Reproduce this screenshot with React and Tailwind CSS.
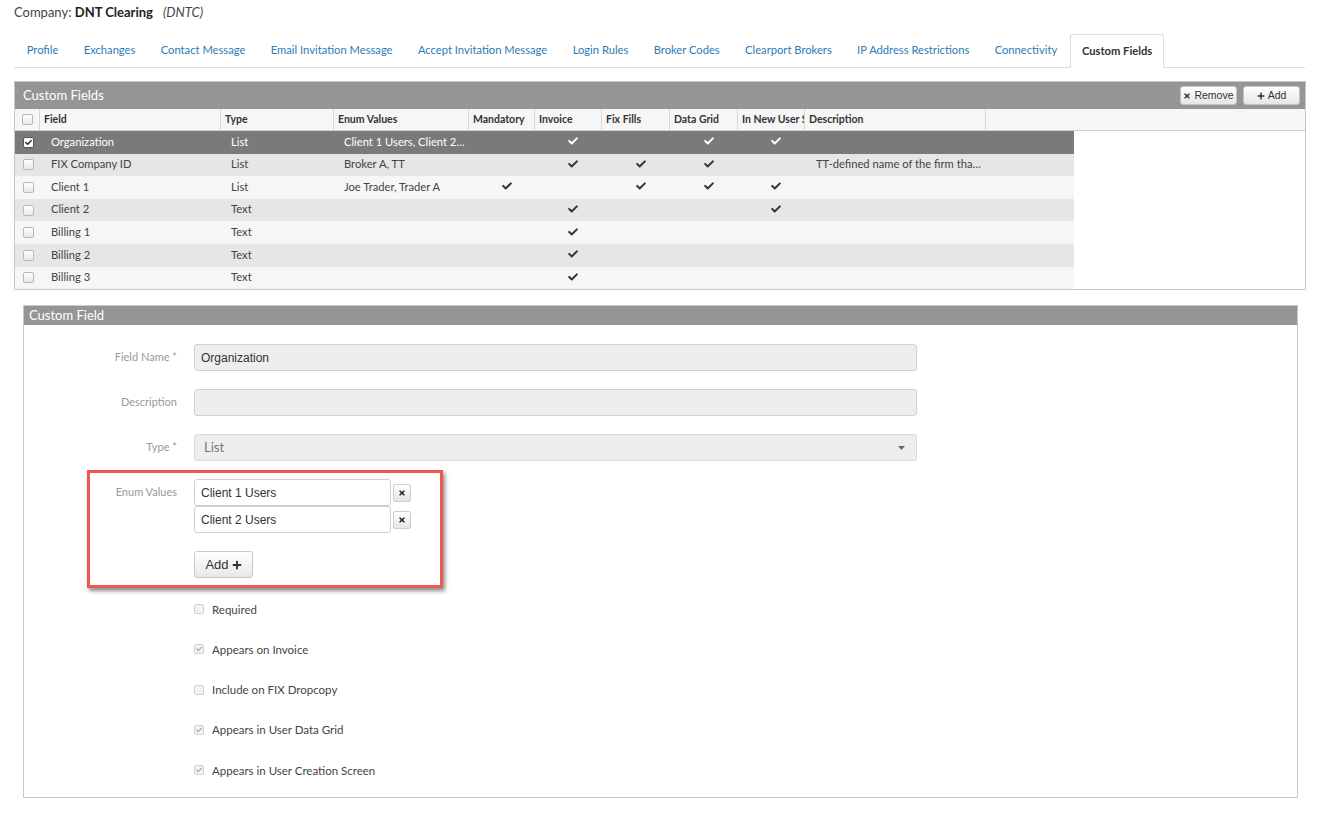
import React from "react";
import { FaCheck, FaTimes, FaPlus } from "react-icons/fa";

const cols = [
  { w: "w-[181px]", label: "Field" },
  { w: "w-[113px]", label: "Type" },
  { w: "w-[135px]", label: "Enum Values" },
  { w: "w-[66px]", label: "Mandatory" },
  { w: "w-[67px]", label: "Invoice" },
  { w: "w-[68px]", label: "Fix Fills" },
  { w: "w-[68px]", label: "Data Grid" },
  { w: "w-[67px]", label: "In New User Screen" },
  { w: "w-[181px]", label: "Description" },
];

const rows = [
  { f: "Organization", t: "List", e: "Client 1 Users, Client 2…", m: 0, i: 1, ff: 0, dg: 1, nu: 1, d: "", sel: true },
  { f: "FIX Company ID", t: "List", e: "Broker A, TT", m: 0, i: 1, ff: 1, dg: 1, nu: 0, d: "TT-defined name of the firm tha…" },
  { f: "Client 1", t: "List", e: "Joe Trader, Trader A", m: 1, i: 0, ff: 1, dg: 1, nu: 1, d: "" },
  { f: "Client 2", t: "Text", e: "", m: 0, i: 1, ff: 0, dg: 0, nu: 1, d: "" },
  { f: "Billing 1", t: "Text", e: "", m: 0, i: 1, ff: 0, dg: 0, nu: 0, d: "" },
  { f: "Billing 2", t: "Text", e: "", m: 0, i: 1, ff: 0, dg: 0, nu: 0, d: "" },
  { f: "Billing 3", t: "Text", e: "", m: 0, i: 1, ff: 0, dg: 0, nu: 0, d: "" },
];

const tabs = [
  "Profile",
  "Exchanges",
  "Contact Message",
  "Email Invitation Message",
  "Accept Invitation Message",
  "Login Rules",
  "Broker Codes",
  "Clearport Brokers",
  "IP Address Restrictions",
  "Connectivity",
];

function Box({ checked, white }) {
  return (
    <span
      className={
        "flex items-center justify-center w-[11px] h-[11px] rounded-[2px] border " +
        (white
          ? "bg-white border-[#555]"
          : "bg-gradient-to-b from-white to-[#e8e8e8] border-[#b8b8b8]")
      }
    >
      {checked && <FaCheck className="text-[#222] w-[7px] h-[7px]" />}
    </span>
  );
}

function Check({ on, sel }) {
  return (
    <div className="flex items-center justify-center pl-[9px] h-full">
      {on ? (
        <FaCheck className={(sel ? "text-white" : "text-[#333]") + " w-[10px] h-[10px]"} />
      ) : null}
    </div>
  );
}

function FormCheck({ checked, label }) {
  return (
    <div className="flex items-center h-[20px]">
      <span className="flex items-center justify-center w-[10px] h-[10px] rounded-[2px] border border-[#d0d0d0] bg-[#f3f3f3]">
        {checked && <FaCheck className="text-[#aaa] w-[6px] h-[6px]" />}
      </span>
      <span className="ml-[8px] text-[11.5px] text-[#444]">{label}</span>
    </div>
  );
}

export default function App() {
  return (
    <div className="w-[1319px] h-[816px] bg-white font-['Lato','Open_Sans',sans-serif] overflow-hidden">
      {/* Company line */}
      <div className="h-[34px] pl-[14px] pt-[3px] text-[13px] leading-[18px] text-[#444]">
        Company: <span className="font-bold text-[#222]">DNT Clearing</span>
        <span className="italic ml-[10px]">(DNTC)</span>
      </div>

      {/* Tabs */}
      <div className="mx-[14px] h-[34px] flex border-b border-[#dcdcdc]">
        {tabs.map((t) => (
          <div
            key={t}
            className="flex items-center px-[12.7px] text-[11.2px] text-[#2f7bb5] whitespace-nowrap"
          >
            {t}
          </div>
        ))}
        <div className="flex items-center px-[11px] text-[11.2px] font-bold text-[#333] bg-white border border-[#dcdcdc] border-b-white rounded-t-[3px] -mb-px">
          Custom Fields
        </div>
      </div>

      {/* Custom Fields panel */}
      <div className="mt-[13px] ml-[14px] w-[1292px] border border-[#c8c8c8]">
        <div className="h-[27px] bg-[#959595] flex items-center justify-between pl-[8px] pr-[5px]">
          <span className="text-[13px] text-white">Custom Fields</span>
          <div className="flex gap-[6px]">
            <button className="flex items-center justify-center gap-[3px] w-[57px] h-[19px] rounded-[3px] border border-[#c4c4c4] bg-gradient-to-b from-white to-[#e6e6e6] text-[10.5px] text-[#333] font-['Liberation_Sans',sans-serif]">
              <FaTimes className="w-[8px] h-[8px]" />
              Remove
            </button>
            <button className="flex items-center justify-center gap-[3px] w-[57px] h-[19px] rounded-[3px] border border-[#c4c4c4] bg-gradient-to-b from-white to-[#e6e6e6] text-[10.5px] text-[#333] font-['Liberation_Sans',sans-serif]">
              <FaPlus className="w-[8px] h-[8px]" />
              Add
            </button>
          </div>
        </div>

        {/* Table header */}
        <div className="flex h-[22px] bg-[#f6f6f6] border-b border-[#cfcfcf] text-[10.5px] font-bold text-[#333]">
          <div className="w-[25px] flex items-center justify-center border-r border-[#d6d6d6]">
            <Box />
          </div>
          {cols.map((c) => (
            <div
              key={c.label}
              className={c.w + " flex items-center pl-[4px] border-r border-[#d6d6d6] whitespace-nowrap overflow-hidden"}
            >
              <span className="block w-full overflow-hidden">{c.label}</span>
            </div>
          ))}
          <div className="flex-1" />
        </div>

        {/* Rows */}
        <div className="w-[1059px] text-[11.2px]">
          {rows.map((r, idx) => {
            const bg = r.sel ? "bg-[#7a7a7a] text-white" : idx % 2 === 1 ? "bg-[#e6e6e6] text-[#444]" : "bg-[#f6f6f6] text-[#444]";
            return (
              <div key={r.f} className={"flex h-[22.6px] items-center " + bg}>
                <div className="w-[25px] flex items-center justify-center pl-[2px]">
                  <Box checked={r.sel} white={r.sel} />
                </div>
                <div className="w-[181px] pl-[11px] whitespace-nowrap leading-none pb-[2px]">{r.f}</div>
                <div className="w-[113px] pl-[10px] leading-none pb-[2px]">{r.t}</div>
                <div className="w-[135px] pl-[10px] whitespace-nowrap leading-none pb-[2px]">{r.e}</div>
                <div className="w-[66px] h-full pb-[2px]"><Check on={r.m} sel={r.sel} /></div>
                <div className="w-[67px] h-full pb-[2px]"><Check on={r.i} sel={r.sel} /></div>
                <div className="w-[68px] h-full pb-[2px]"><Check on={r.ff} sel={r.sel} /></div>
                <div className="w-[68px] h-full pb-[2px]"><Check on={r.dg} sel={r.sel} /></div>
                <div className="w-[67px] h-full pb-[2px]"><Check on={r.nu} sel={r.sel} /></div>
                <div className="flex-1 pl-[11px] whitespace-nowrap leading-none pb-[2px]">{r.d}</div>
              </div>
            );
          })}
        </div>
      </div>

      {/* Custom Field panel */}
      <div className="mt-[15px] ml-[23px] w-[1275px] h-[493px] border border-[#c8c8c8]">
        <div className="h-[19px] bg-[#959595] flex items-center pl-[5px]">
          <span className="text-[13px] text-white leading-none">Custom Field</span>
        </div>
        <div className="pt-[19px] flex flex-col">
          <div className="flex items-center h-[27px]">
            <div className="w-[153px] text-right text-[11px] text-[#999]">Field Name *</div>
            <div className="ml-[17px] w-[723px] h-[27px] rounded-[3px] border border-[#d2d2d2] bg-[#eeeeee] flex items-center pl-[6px] text-[12px] text-[#333] font-['Liberation_Sans',sans-serif]">
              Organization
            </div>
          </div>
          <div className="flex items-center h-[27px] mt-[18px]">
            <div className="w-[153px] text-right text-[11px] text-[#999]">Description</div>
            <div className="ml-[17px] w-[723px] h-[27px] rounded-[3px] border border-[#d2d2d2] bg-[#eeeeee]" />
          </div>
          <div className="flex items-center h-[27px] mt-[18px]">
            <div className="w-[153px] text-right text-[11px] text-[#999]">Type *</div>
            <div className="ml-[17px] w-[723px] h-[27px] rounded-[3px] border border-[#dadada] bg-[#eeeeee] flex items-center justify-between pl-[9px] pr-[11px] text-[13px] text-[#777]">
              List
              <svg width="7" height="4" viewBox="0 0 7 4">
                <path d="M0 0 L7 0 L3.5 4 Z" fill="#666" />
              </svg>
            </div>
          </div>

          {/* Enum values */}
          <div className="relative mt-[18px] flex">
            <div className="w-[153px] h-[27px] flex items-center justify-end text-[11px] text-[#999]">Enum Values</div>
            <div className="ml-[17px] flex flex-col">
              {["Client 1 Users", "Client 2 Users"].map((v) => (
                <div key={v} className="flex items-center">
                  <div className="w-[197px] h-[27px] rounded-[3px] border border-[#cfcfcf] bg-white flex items-center pl-[6px] text-[12px] text-[#333] font-['Liberation_Sans',sans-serif]">
                    {v}
                  </div>
                  <div className="ml-[2px] w-[18px] h-[18px] rounded-[2px] border border-[#cfcfcf] bg-gradient-to-b from-white to-[#e6e6e6] flex items-center justify-center">
                    <FaTimes className="w-[8px] h-[8px] text-[#222]" />
                  </div>
                </div>
              ))}
              <button className="mt-[18px] w-[59px] h-[27px] rounded-[3px] border border-[#c8c8c8] bg-gradient-to-b from-white to-[#e8e8e8] flex items-center justify-center gap-[3px] text-[13px] text-[#333] font-['Liberation_Sans',sans-serif]">
                Add
                <FaPlus className="w-[10px] h-[10px]" />
              </button>
            </div>
            <div className="absolute left-[63px] top-[-9px] w-[356px] h-[118px] border-[3px] border-[#f0584d] shadow-[2px_3px_4px_rgba(0,0,0,0.45)] pointer-events-none" />
          </div>

          {/* Checkboxes */}
          <div className="ml-[170px] mt-[21px] flex flex-col gap-[20.25px]">
            <FormCheck label="Required" />
            <FormCheck checked label="Appears on Invoice" />
            <FormCheck label="Include on FIX Dropcopy" />
            <FormCheck checked label="Appears in User Data Grid" />
            <FormCheck checked label="Appears in User Creation Screen" />
          </div>
        </div>
      </div>
    </div>
  );
}
